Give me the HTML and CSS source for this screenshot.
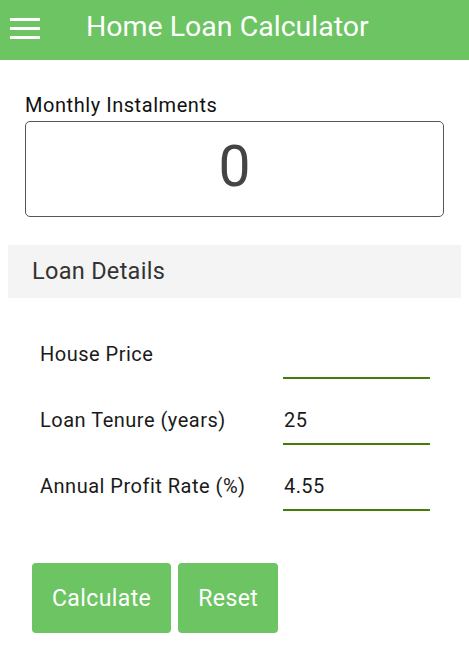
FILE: index.html
```html
<!DOCTYPE html>
<html lang="en">
<head>
<meta charset="utf-8">
<title>Home Loan Calculator</title>
<link rel="stylesheet" href="styles.css">
</head>
<body>
<header class="appbar">
  <button class="menu-btn" aria-label="Menu">
    <svg width="30" height="21" viewBox="0 0 30 21" aria-hidden="true">
      <rect x="0" y="0" width="30" height="3" fill="#fff"/>
      <rect x="0" y="9" width="30" height="3" fill="#fff"/>
      <rect x="0" y="18" width="30" height="3" fill="#fff"/>
    </svg>
  </button>
  <h1 class="title">Home Loan Calculator</h1>
</header>
<main class="content">
  <section class="result">
    <div class="result-label">Monthly Instalments</div>
    <div class="result-box">0</div>
  </section>
  <div class="section-band">Loan Details</div>
  <form class="form">
    <label class="row">
      <span class="row-label">House Price</span>
      <input class="row-input" type="text" value="">
    </label>
    <label class="row">
      <span class="row-label">Loan Tenure (years)</span>
      <input class="row-input" type="text" value="25">
    </label>
    <label class="row">
      <span class="row-label">Annual Profit Rate (%)</span>
      <input class="row-input" type="text" value="4.55">
    </label>
    <div class="actions">
      <button type="button" class="btn">Calculate</button>
      <button type="button" class="btn">Reset</button>
    </div>
  </form>
</main>
</body>
</html>
```
FILE: styles.css
```css
* { box-sizing: border-box; }
html, body { margin: 0; padding: 0; background: #fff; }
body {
  font-family: Roboto, "Liberation Sans", sans-serif;
  color: #1a1a1a;
  width: 469px;
  height: 647px;
  overflow: hidden;
}
.appbar {
  height: 60px;
  background: #6cc462;
  display: flex;
  align-items: center;
}
.menu-btn {
  border: 0;
  background: transparent;
  padding: 0;
  margin: 0 0 0 10px;
  width: 30px;
  height: 21px;
  display: flex;
  margin-top: -3px;
}
.title {
  margin: 0 0 0 46px;
  font-weight: 400;
  font-size: 28.5px;
  color: #fff;
  line-height: 36px;
  margin-top: -6px;
}
.result {
  padding: 33px 25px 0;
}
.result-label {
  font-size: 20px;
  line-height: 24px;
  letter-spacing: 0.55px;
  color: #111;
  margin-bottom: 4px;
}
.result-box {
  height: 96px;
  border: 1px solid #555;
  border-radius: 5px;
  text-align: center;
  font-size: 57px;
  line-height: 89px;
  color: #444;
}
.section-band {
  margin: 28px 8px 0;
  height: 53px;
  background: #f4f4f4;
  padding-left: 24px;
  font-size: 23.5px;
  letter-spacing: 0.3px;
  line-height: 52px;
  color: #333;
}
.form {
  margin-top: 15px;
}
.row {
  display: grid;
  grid-template-columns: 243px 147px;
  align-items: end;
  padding-left: 40px;
  height: 66px;
}
.row-label {
  font-size: 20px;
  line-height: 24px;
  letter-spacing: 0.5px;
  padding-bottom: 13px;
  color: #1a1a1a;
}
.row-input {
  font-family: Roboto, "Liberation Sans", sans-serif;
  font-size: 20px;
  letter-spacing: 0.4px;
  color: #1a1a1a;
  height: 37px;
  padding: 0 0 11px 1px;
  border: 0;
  border-bottom: 2px solid #437c06;
  background: transparent;
  outline: none;
  width: 147px;
  border-radius: 0;
}
.actions {
  display: flex;
  gap: 7px;
  padding-left: 32px;
  margin-top: 52px;
}
.btn {
  height: 70px;
  padding: 0 20px;
  border: 0;
  border-radius: 4px;
  background: #6cc462;
  color: #fff;
  font-family: Roboto, "Liberation Sans", sans-serif;
  font-size: 23px;
  letter-spacing: 0.4px;
}
```
